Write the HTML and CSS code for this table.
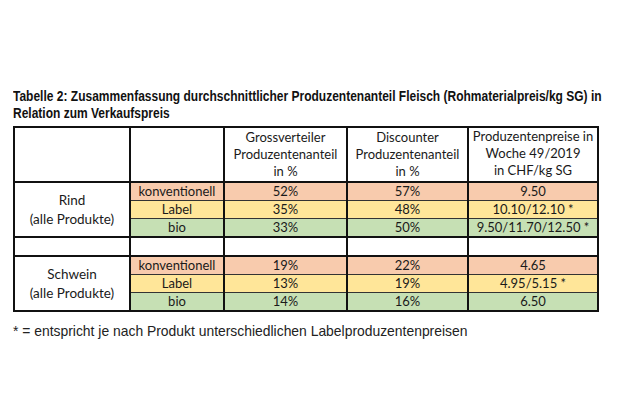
FILE: index.html
```html
<!DOCTYPE html>
<html lang="de">
<head>
<meta charset="utf-8">
<link rel="stylesheet" href="styles.css">
</head>
<body>
<div class="page">
  <h1 class="title">Tabelle 2: Zusammenfassung durchschnittlicher Produzentenanteil Fleisch (Rohmaterialpreis/kg SG) in Relation zum Verkaufspreis</h1>
  <table class="data">
    <colgroup>
      <col class="c1"><col class="c2"><col class="c3"><col class="c4"><col class="c5">
    </colgroup>
    <tr class="head">
      <td></td>
      <td></td>
      <td>Grossverteiler<br>Produzentenanteil<br>in %</td>
      <td>Discounter<br>Produzentenanteil<br>in %</td>
      <td class="top">Produzentenpreise in<br>Woche 49/2019<br>in CHF/kg SG</td>
    </tr>
    <tr class="row orange">
      <td rowspan="3" class="group">Rind<br>(alle Produkte)</td>
      <td>konventionell</td><td>52%</td><td>57%</td><td>9.50</td>
    </tr>
    <tr class="row yellow">
      <td>Label</td><td>35%</td><td>48%</td><td>10.10/12.10 *</td>
    </tr>
    <tr class="row green">
      <td>bio</td><td>33%</td><td>50%</td><td>9.50/11.70/12.50 *</td>
    </tr>
    <tr class="row empty">
      <td></td><td></td><td></td><td></td><td></td>
    </tr>
    <tr class="row orange">
      <td rowspan="3" class="group">Schwein<br>(alle Produkte)</td>
      <td>konventionell</td><td>19%</td><td>22%</td><td>4.65</td>
    </tr>
    <tr class="row yellow">
      <td>Label</td><td>13%</td><td>19%</td><td>4.95/5.15 *</td>
    </tr>
    <tr class="row green">
      <td>bio</td><td>14%</td><td>16%</td><td>6.50</td>
    </tr>
  </table>
  <p class="note">* = entspricht je nach Produkt unterschiedlichen Labelproduzentenpreisen</p>
</div>
</body>
</html>
```
FILE: styles.css
```css
html, body {
  margin: 0;
  padding: 0;
  background: #ffffff;
}
.page {
  width: 620px;
  height: 420px;
  padding: 87px 0 0 13px;
  box-sizing: border-box;
  overflow: hidden;
}
.title {
  margin: 0;
  width: 745px;
  font-family: "Liberation Sans", Arial, sans-serif;
  font-weight: bold;
  font-size: 15px;
  line-height: 17px;
  color: #111;
  transform: scaleX(0.8);
  transform-origin: left top;
}
.data {
  margin-top: 5px;
  border-collapse: collapse;
  table-layout: fixed;
  width: 584px;
  font-family: Lato, "Open Sans", sans-serif;
  font-size: 13px;
  color: #1a1a1a;
}
.c1 { width: 116px; }
.c2 { width: 94px; }
.c3 { width: 123px; }
.c4 { width: 121px; }
.c5 { width: 130px; }
.data td {
  border-left: 2px solid #111;
  border-right: 2px solid #111;
  border-top: 1px solid #333;
  border-bottom: 1px solid #333;
  text-align: center;
  padding: 0;
  line-height: 17px;
}
.head td {
  height: 51px;
  border-top: 2px solid #111;
  border-bottom: 2px solid #111;
  vertical-align: bottom;
  padding-bottom: 1px;
}
.head td.top {
  padding-bottom: 2px;
}
.row td {
  height: 17px;
}
.group {
  background: #fff;
  border-bottom: 2px solid #111 !important;
  vertical-align: middle;
  line-height: 19px !important;
  font-size: 13.5px;
}
.empty td {
  border-top: 2px solid #111;
  border-bottom: 2px solid #111;
}
.data tr:last-child td {
  border-bottom: 2px solid #111;
}
.orange td { background: #f8cbad; }
.yellow td { background: #ffe699; }
.green td { background: #c6e0b4; }
.orange td.group { background: #fff; }
.note {
  margin: 11px 0 0 0;
  font-family: "Liberation Sans", Arial, sans-serif;
  font-size: 13.9px;
  color: #222;
}
```
